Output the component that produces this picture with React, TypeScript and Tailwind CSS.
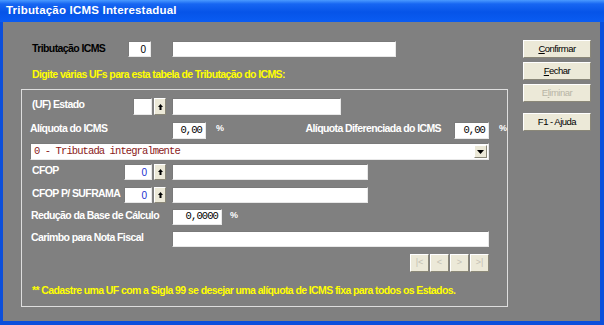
import React from "react";

const input =
  "bg-white border border-t-[#7a7a7a] border-l-[#7a7a7a] border-b-[#e8e8e8] border-r-[#e8e8e8]";
const bevel =
  "bg-[#ece9d8] border border-t-white border-l-white border-b-[#8a8778] border-r-[#8a8778]";
const lbl = "text-[10.5px] leading-[12px] font-bold tracking-[-0.6px] whitespace-nowrap";
const mono = "text-[10.5px] tracking-[-0.9px] font-['Liberation_Mono',monospace]";
const pct = "text-[9px] leading-[12px] font-bold text-white";

function Spin() {
  return (
    <div className={`w-[12px] h-full ml-[2px] flex items-center justify-center ${bevel}`}>
      <svg width="5" height="6" viewBox="0 0 5 6">
        <polygon points="2.5,0 5,3 0,3" fill="#000" />
        <rect x="1.5" y="3" width="2" height="3" fill="#000" />
      </svg>
    </div>
  );
}

function Label({ w, children }: { w: string; children: React.ReactNode }) {
  return <div className={`${w} ${lbl} text-white`}>{children}</div>;
}

function Btn({ children, disabled }: { children: React.ReactNode; disabled?: boolean }) {
  return (
    <div
      className={`w-[68px] h-[18px] flex items-center justify-center text-[9.5px] tracking-[-0.5px] ${bevel} ${
        disabled ? "text-[#b8b5a6]" : "text-black"
      }`}
    >
      {children}
    </div>
  );
}

export default function App() {
  return (
    <div className="w-[604px] h-[325px] flex flex-col bg-[#0b4fdc] font-['Liberation_Sans',Arial,sans-serif] overflow-hidden">
      <div className="h-[22px] shrink-0 flex items-center px-[6px] bg-[linear-gradient(to_bottom,#4a9aff_0%,#1766f2_18%,#0654e8_55%,#0a5cf2_100%)]">
        <span className="text-white font-bold text-[11.5px] tracking-[0.2px]">Tributação ICMS Interestadual</span>
      </div>
      <div className="flex-1 ml-[3px] mr-[4px] mb-[4px] bg-[#808080] flex">
        {/* left column */}
        <div className="w-[505px] pl-[18px] pt-[19px] flex flex-col">
          <div className="h-[16px] flex items-start pl-[11px]">
            <div className={`w-[96px] ${lbl} text-black pt-[1px]`}>Tributação ICMS</div>
            <div className={`w-[23px] h-full ${input} flex items-center justify-end pr-[4px] text-[10px] text-black`}>0</div>
            <div className={`w-[224px] h-full ml-[21px] ${input}`} />
          </div>
          <div className={`mt-[11px] pl-[11px] ${lbl} text-[#ffff00]`}>
            Digite várias UFs para esta tabela de Tributação do ICMS:
          </div>
          <div className="mt-[9px] w-[487px] h-[218px] border border-[#dedede] flex flex-col">
            {/* UF Estado */}
            <div className="mt-[8px] h-[17px] flex items-start pl-[10px]">
              <Label w="w-[101px]">(UF) Estado</Label>
              <div className={`w-[19px] h-full ${input}`} />
              <Spin />
              <div className={`w-[169px] h-full ml-[6px] ${input}`} />
            </div>
            {/* Aliquota */}
            <div className="mt-[7px] h-[17px] flex items-start pl-[8px] pr-[1px]">
              <Label w="w-[142px]">Alíquota do ICMS</Label>
              <div className={`w-[34px] h-full ${input} flex items-center justify-end pr-[3px] ${mono} text-black`}>0,00</div>
              <div className={`ml-[10px] ${pct}`}>%</div>
              <div className={`ml-auto ${lbl} text-white`}>Alíquota Diferenciada do ICMS</div>
              <div className={`w-[35px] h-full ml-[13px] ${input} flex items-center justify-end pr-[3px] ${mono} text-black`}>0,00</div>
              <div className={`ml-[10px] w-[7px] ${pct}`}>%</div>
            </div>
            {/* Dropdown */}
            <div className={`mt-[4px] h-[17px] ml-[8px] w-[459px] flex items-center ${input}`}>
              <div className={`flex-1 pl-[3px] ${mono} text-[#8b1a1a] whitespace-nowrap`}>0 - Tributada integralmente</div>
              <div className={`w-[13px] h-[13px] mr-[1px] flex items-center justify-center ${bevel}`}>
                <svg width="7" height="4" viewBox="0 0 7 4">
                  <polygon points="0,0 7,0 3.5,4" fill="#000" />
                </svg>
              </div>
            </div>
            {/* CFOP */}
            <div className="mt-[4px] h-[16px] flex items-start pl-[10px]">
              <Label w="w-[92px]">CFOP</Label>
              <div className={`w-[28px] h-full ${input} flex items-center justify-end pr-[4px] text-[10px] text-[#1a2fd0]`}>0</div>
              <Spin />
              <div className={`w-[196px] h-full ml-[6px] ${input}`} />
            </div>
            {/* CFOP SUFRAMA */}
            <div className="mt-[7px] h-[16px] flex items-start pl-[10px]">
              <Label w="w-[92px]">CFOP P/ SUFRAMA</Label>
              <div className={`w-[28px] h-full ${input} flex items-center justify-end pr-[4px] text-[10px] text-[#1a2fd0]`}>0</div>
              <Spin />
              <div className={`w-[196px] h-full ml-[6px] ${input}`} />
            </div>
            {/* Reducao */}
            <div className="mt-[6px] h-[16px] flex items-start pl-[9px]">
              <Label w="w-[141px]">Redução da Base de Cálculo</Label>
              <div className={`w-[50px] h-full ${input} flex items-center justify-end pr-[3px] ${mono} text-black`}>0,0000</div>
              <div className={`ml-[8px] ${pct}`}>%</div>
            </div>
            {/* Carimbo */}
            <div className="mt-[6px] h-[16px] flex items-start pl-[9px]">
              <Label w="w-[141px]">Carimbo para Nota Fiscal</Label>
              <div className={`w-[317px] h-full ${input}`} />
            </div>
            {/* Nav */}
            <div className="mt-[7px] h-[18px] flex justify-end pr-[18px] gap-[1px]">
              {["|<", "<", ">", ">|"].map((g) => (
                <div key={g} className={`w-[19px] h-full flex items-center justify-center text-[9px] text-[#c4c1b4] ${bevel}`}>
                  {g}
                </div>
              ))}
            </div>
            <div className={`mt-[12px] pl-[10px] ${lbl} text-[#ffff00]`}>
              ** Cadastre uma UF com a Sigla 99 se desejar uma alíquota de ICMS fixa para todos os Estados.
            </div>
          </div>
        </div>
        {/* right column */}
        <div className="ml-[15px] pt-[18px] flex flex-col gap-[4px]">
          <Btn>
            <span className="underline">C</span>onfirmar
          </Btn>
          <Btn>
            <span className="underline">F</span>echar
          </Btn>
          <Btn disabled>
            E<span className="underline">l</span>iminar
          </Btn>
          <div className="mt-[7px]">
            <Btn>F1 - Ajuda</Btn>
          </div>
        </div>
      </div>
    </div>
  );
}
